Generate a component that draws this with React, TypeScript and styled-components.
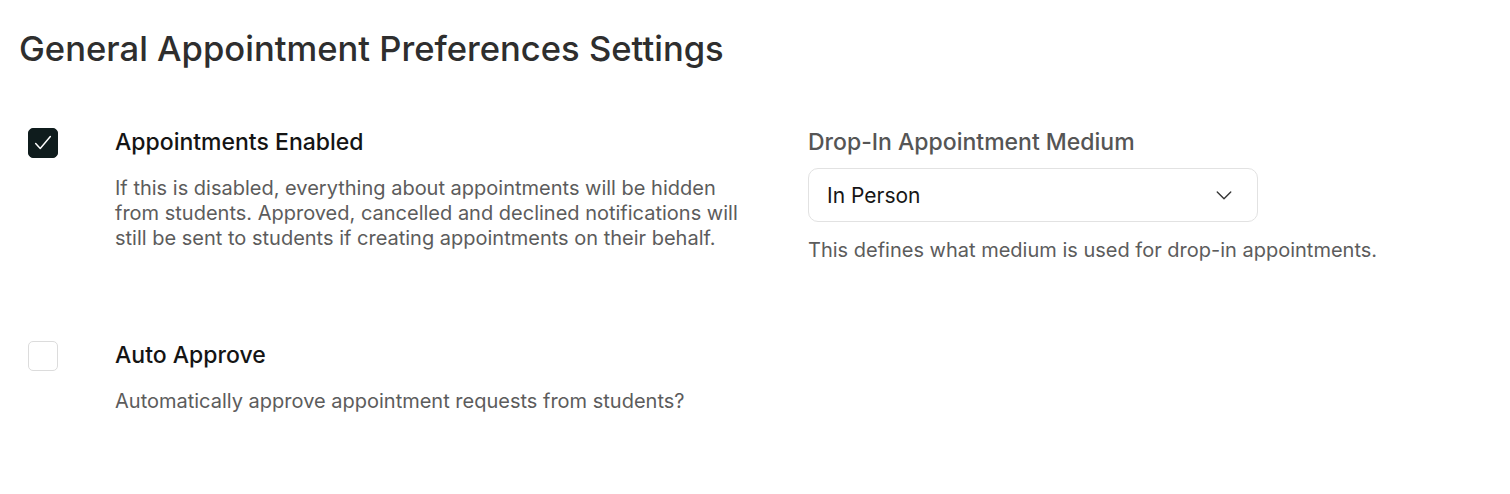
import React from "react";
import styled, { createGlobalStyle } from "styled-components";

const Global = createGlobalStyle`
  html, body { margin: 0; padding: 0; background: #ffffff; }
  body { font-family: Inter, "Liberation Sans", Arial, sans-serif; -webkit-font-smoothing: antialiased; }
  * { box-sizing: border-box; }
`;

const Page = styled.div`
  padding: 26px 19px 0 19px;
  width: 1510px;
  height: 494px;
`;

const Title = styled.h1`
  margin: 0;
  font-size: 34.6px;
  font-weight: 500;
  color: #2e2e2e;
  line-height: 44px;
`;

const Grid = styled.div`
  display: grid;
  grid-template-columns: 740px 1fr;
  margin-top: 58px;
`;

const Column = styled.div`
  display: flex;
  flex-direction: column;
  gap: 90px;
`;

const Option = styled.div`
  display: grid;
  grid-template-columns: 96px 1fr;
  align-items: start;
`;

const Box = styled.span<{ $checked?: boolean }>`
  margin-left: 9px;
  width: 30px;
  height: 30px;
  border-radius: 5px;
  display: flex;
  align-items: center;
  justify-content: center;
  background: ${(p) => (p.$checked ? "#0f1c1d" : "#ffffff")};
  border: 1px solid ${(p) => (p.$checked ? "#0f1c1d" : "#dcdcdc")};
`;

const OptionText = styled.div`
  display: flex;
  flex-direction: column;
  gap: 20px;
`;

const Label = styled.div`
  font-size: 23px;
  font-weight: 500;
  line-height: 28px;
  color: #141414;
`;

const Desc = styled.div`
  font-size: 20px;
  line-height: 25px;
  color: #5c5c5c;
  max-width: 630px;
`;

const Field = styled.div`
  display: flex;
  flex-direction: column;
  padding-left: 49px;
`;

const FieldLabel = styled.div`
  font-size: 23px;
  font-weight: 500;
  line-height: 28px;
  color: #555555;
`;

const Select = styled.div`
  margin-top: 12px;
  width: 450px;
  height: 54px;
  border: 1px solid #e2e2e2;
  border-radius: 10px;
  display: flex;
  align-items: center;
  justify-content: space-between;
  padding: 0 24px 0 18px;
  font-size: 21px;
  color: #161616;
`;

const Helper = styled.div`
  margin-top: 16px;
  font-size: 20px;
  line-height: 25px;
  color: #5c5c5c;
`;

const Check = () => (
  <svg width="22" height="22" viewBox="0 0 24 24" fill="none" stroke="#ffffff" strokeWidth="1.6" strokeLinecap="round" strokeLinejoin="round">
    <path d="M4 12.5l5 5.5L20 5" />
  </svg>
);

const Chevron = () => (
  <svg width="18" height="18" viewBox="0 0 24 24" fill="none" stroke="#333" strokeWidth="1.8" strokeLinecap="round" strokeLinejoin="round">
    <path d="M3 8l9 9 9-9" />
  </svg>
);

export default function App() {
  return (
    <Page>
      <Global />
      <Title>General Appointment Preferences Settings</Title>
      <Grid>
        <Column>
          <Option>
            <Box $checked>
              <Check />
            </Box>
            <OptionText>
              <Label>Appointments Enabled</Label>
              <Desc>
                If this is disabled, everything about appointments will be hidden from students. Approved, cancelled and declined notifications will still be sent to students if creating appointments on their behalf.
              </Desc>
            </OptionText>
          </Option>
          <Option>
            <Box />
            <OptionText>
              <Label>Auto Approve</Label>
              <Desc>Automatically approve appointment requests from students?</Desc>
            </OptionText>
          </Option>
        </Column>
        <Field>
          <FieldLabel>Drop-In Appointment Medium</FieldLabel>
          <Select>
            <span>In Person</span>
            <Chevron />
          </Select>
          <Helper>This defines what medium is used for drop-in appointments.</Helper>
        </Field>
      </Grid>
    </Page>
  );
}
